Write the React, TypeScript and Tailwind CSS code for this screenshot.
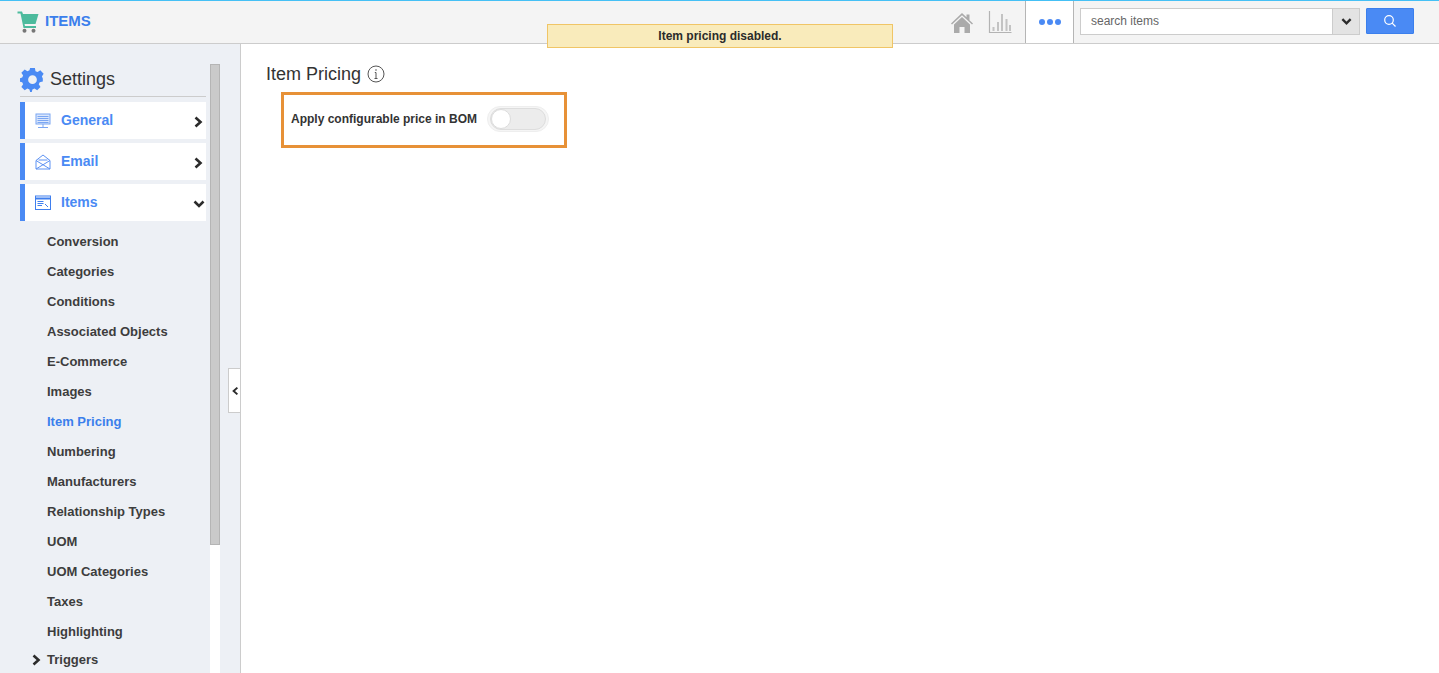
import React from "react";

const font = { };

function Chevron({ dir, className }: { dir: "right" | "down" | "left"; className?: string }) {
  const d = dir === "right" ? "M3.5 1.5 L8.5 6 L3.5 10.5" : dir === "left" ? "M8.5 1.5 L3.5 6 L8.5 10.5" : "M1.5 3.5 L6 8 L10.5 3.5";
  return (
    <svg viewBox="0 0 12 12" className={className} fill="none" stroke="#2b2b2b" strokeWidth="2.6">
      <path d={d} />
    </svg>
  );
}

function MonitorIcon() {
  return (
    <svg width="16" height="16" viewBox="0 0 16 16" fill="none" stroke="#7ba6f2" strokeWidth="1">
      <rect x="1" y="1" width="14" height="10" fill="#dbe7fc" />
      <path d="M2.5 3.5H13.5M2.5 5.5H13.5M2.5 7.5H13.5M2.5 9.5H13.5M8 11V14M3 14.5H13" />
    </svg>
  );
}
function MailIcon() {
  return (
    <svg width="16" height="16" viewBox="0 0 16 16" fill="none" stroke="#5d92f3" strokeWidth="1">
      <path d="M1 6.5 L8 1 L15 6.5 V15 H1 Z M1 6.5 L15 15 M15 6.5 L1 15 M3.5 6 H12.5" />
    </svg>
  );
}
function ItemsIcon() {
  return (
    <svg width="16" height="16" viewBox="0 0 16 16" fill="none" stroke="#3f7fee" strokeWidth="1">
      <rect x="0.5" y="1" width="15" height="13.5" />
      <path d="M0.5 3.5H15.5" strokeWidth="2" />
      <path d="M2.5 6.5H8.5M2.5 8.5H8.5M2.5 10.5H7M10 9l3 3" />
    </svg>
  );
}

function MenuRow({ icon, label, open }: { icon: React.ReactNode; label: string; open?: boolean }) {
  return (
    <div className="flex h-[37px] items-center border-l-[5px] border-[#4a8af4] bg-white">
      <span className="ml-[10px] flex w-[16px] justify-center">{icon}</span>
      <span className="ml-[10px] flex-1 text-[14px] font-bold text-[#4a8af4]">{label}</span>
      <Chevron dir={open ? "down" : "right"} className={open ? "mr-[1px] mt-[2px] h-[12px] w-[12px]" : "mr-[2px] mt-[2px] h-[12px] w-[12px]"} />
    </div>
  );
}

const subItems = ["Conversion", "Categories", "Conditions", "Associated Objects", "E-Commerce", "Images", "Item Pricing", "Numbering", "Manufacturers", "Relationship Types", "UOM", "UOM Categories", "Taxes", "Highlighting"];

export default function App() {
  return (
    <div className="relative flex h-[673px] w-[1439px] flex-col overflow-hidden bg-white font-['Liberation_Sans',Arial,sans-serif] text-[#333]">
      <header className="flex h-[44px] shrink-0 items-stretch border-t border-b border-t-[#45c0f5] border-b-[#cccccc] bg-[#f4f4f4]">
        <div className="flex items-center pl-[17px]">
          <svg width="22" height="22" viewBox="0 0 22 22" className="mb-[1px]">
            <path d="M0.5 0.5H5L6 3H21.5L18.5 13H7.5L8 15H19V17H6.5L3.5 2.5H0.5Z" fill="#4dbb9d" />
            <circle cx="7.5" cy="19.7" r="2" fill="#777" />
            <circle cx="16.5" cy="19.7" r="2" fill="#777" />
          </svg>
          <span className="ml-[6px] mb-[2px] text-[15px] font-bold text-[#3b7fec]">ITEMS</span>
        </div>
        <div className="ml-auto flex items-stretch">
          <div className="mr-[13px] flex items-center gap-[14px]">
            <svg width="24" height="24" viewBox="0 0 24 24" className="mt-[1px]">
              <path d="M1 12.5 L12 2 L16.5 6.3V3.5H19.5V9.2L23 12.5L22 13.5L12 4.3L2 13.5Z" fill="#aaa" />
              <path d="M4 13.5L12 6L20 13.5V22H14.5V16H9.5V22H4Z" fill="#aaa" />
            </svg>
            <svg width="24" height="24" viewBox="0 0 24 24" fill="none" stroke="#b3b3b3" strokeWidth="1.2">
              <path d="M1.5 1V22.5H23.5" />
              <path d="M5.5 21V17M10 21V12M14 21V4M18.5 21V9M22 21V15" strokeWidth="2" opacity="0.75" />
            </svg>
          </div>
          <div className="flex w-[49px] items-center justify-center border-x border-[#b5b5b5] bg-white">
            <span className="flex gap-[2px]">
              <span className="h-[6px] w-[6px] rounded-full bg-[#4a8af4]" />
              <span className="h-[6px] w-[6px] rounded-full bg-[#4a8af4]" />
              <span className="h-[6px] w-[6px] rounded-full bg-[#4a8af4]" />
            </span>
          </div>
          <div className="flex items-center pb-[2px] pl-[6px] pr-[25px]">
            <div className="flex h-[27px] w-[280px] border border-[#cccccc] bg-white">
              <span className="flex flex-1 items-center pl-[10px] text-[12px] text-[#666]">search items</span>
              <span className="flex w-[27px] items-center justify-center border-l border-[#cccccc] bg-[#e3e3e3]">
                <Chevron dir="down" className="h-[11px] w-[11px]" />
              </span>
            </div>
            <button className="ml-[6px] flex h-[26px] w-[48px] items-center justify-center rounded-[1px] border border-[#3b7fec] bg-[#4a8af4]">
              <svg width="14" height="14" viewBox="0 0 14 14" fill="none" stroke="white" strokeWidth="1.2">
                <circle cx="6" cy="6" r="4.3" />
                <path d="M9.2 9.2L12.5 12.5" />
              </svg>
            </button>
          </div>
        </div>
      </header>

      <div className="absolute left-[547px] top-[24px] z-10 flex h-[24px] w-[346px] items-center justify-center border border-[#f0c566] bg-[#f9ebbb] text-[12px] font-bold text-[#2b2b2b]">
        Item pricing disabled.
      </div>

      <div className="flex min-h-0 flex-1">
        <aside className="relative flex w-[241px] shrink-0 border-r border-[#cccccc] bg-[#edf0f5]">
          <div className="w-[210px] shrink-0 overflow-hidden pl-[20px] pr-[4px]">
            <div className="mt-[20px] flex h-[33px] items-center gap-[5px] border-b border-[#cccccc] pb-[2px]">
              <svg width="25" height="25" viewBox="0 0 24 24" fill="#4a8af4">
                <path fillRule="evenodd" d="M9.7 1h4.6l.6 3 2 .9 2.6-1.7 3.2 3.2-1.7 2.6.9 2V14l-3 .6-.9 2 1.7 2.6-3.2 3.2-2.6-1.7-2 .9-.6 2.4H9.7l-.6-2.4-2-.9-2.6 1.7-3.2-3.2 1.7-2.6-.9-2-3-.6V11l3-.9.9-2-1.7-2.6 3.2-3.2 2.6 1.7 2-.9ZM12 8a4.2 4.2 0 1 0 0 8.400a4.200 4.200 0 0 0 0-8.400Z" />
              </svg>
              <span className="text-[18px] text-[#333]">Settings</span>
            </div>
            <div className="mt-[5px] flex flex-col gap-[4px]">
              <MenuRow icon={<MonitorIcon />} label="General" />
              <MenuRow icon={<MailIcon />} label="Email" />
              <MenuRow icon={<ItemsIcon />} label="Items" open />
            </div>
            <ul className="mt-[6px] pl-[27px]">
              {subItems.map((s) => (
                <li key={s} className={"flex h-[30px] items-center whitespace-nowrap text-[13px] font-bold " + (s === "Item Pricing" ? "text-[#3b7fec]" : "text-[#3d3d3d]")}>
                  {s}
                </li>
              ))}
              <li className="relative flex h-[26px] items-center text-[13px] font-bold text-[#3d3d3d]">
                <Chevron dir="right" className="absolute left-[-17px] h-[12px] w-[12px]" />
                Triggers
              </li>
            </ul>
          </div>
          <div className="mt-[20px] flex w-[10px] shrink-0 flex-col bg-white">
            <div className="h-[481px] border border-[#b5b5b5] bg-[#cacaca]" />
          </div>
          <div className="absolute right-0 top-[324px] flex h-[45px] w-[12px] items-center border border-r-0 border-[#cccccc] bg-white pl-[2px]">
            <Chevron dir="left" className="h-[12px] w-[12px]" />
          </div>
        </aside>

        <main className="min-w-0 flex-1 pl-[25px] pt-[19px]">
          <div className="flex items-center gap-[6px]">
            <h1 className="text-[18px] font-normal leading-[22px] text-[#333]">Item Pricing</h1>
            <svg width="18" height="18" viewBox="0 0 18 18" fill="none" stroke="#555" strokeWidth="1">
              <circle cx="9" cy="9" r="8" />
              <path d="M9 7.5V13.500M7.500 13.500H10.500M7.800 7.500H9" />
              <circle cx="9" cy="5" r="0.8" fill="#555" stroke="none" />
            </svg>
          </div>
          <div className="ml-[15px] mt-[7px] flex h-[56px] w-[286px] items-center border-[3px] border-[#e79137] pl-[7px]">
            <span className="mb-[2px] text-[12px] font-bold text-[#333]">Apply configurable price in BOM</span>
            <span className="mb-[3px] ml-[10px] flex h-[26px] w-[62px] items-center rounded-full border border-[#eeeeee] bg-[#f5f5f5] p-[2px]">
              <span className="flex h-[22px] w-[58px] items-center rounded-full border border-[#dddddd] bg-[#ececec]">
                <span className="h-[20px] w-[20px] rounded-full border border-[#dcdcdc] bg-white" />
              </span>
            </span>
          </div>
        </main>
      </div>
    </div>
  );
}
